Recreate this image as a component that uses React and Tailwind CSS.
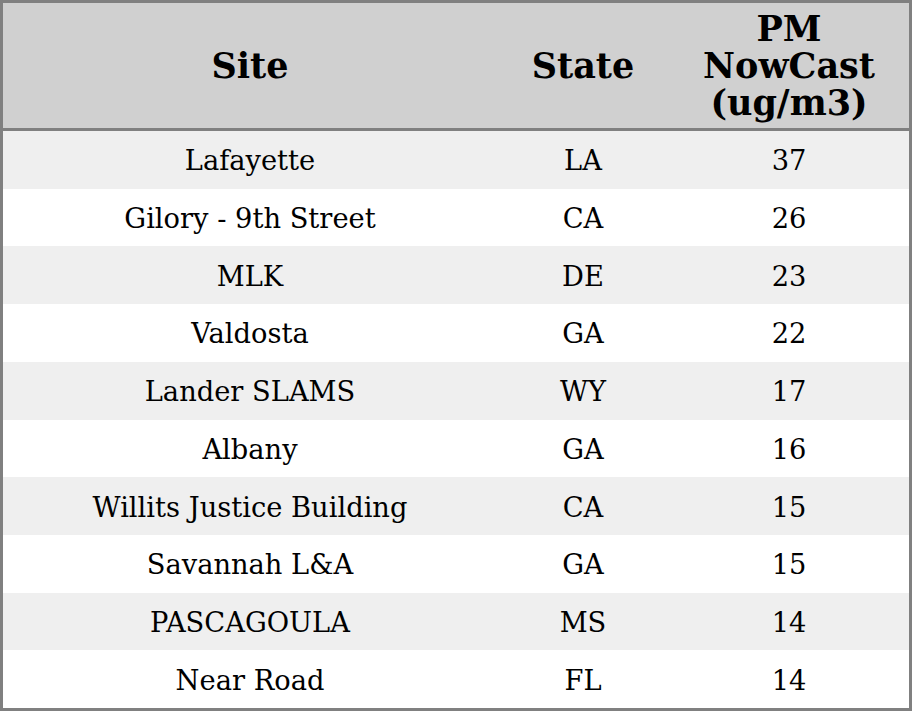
import React from 'react';

const rows = [
  ['Lafayette', 'LA', '37'],
  ['Gilory - 9th Street', 'CA', '26'],
  ['MLK', 'DE', '23'],
  ['Valdosta', 'GA', '22'],
  ['Lander SLAMS', 'WY', '17'],
  ['Albany', 'GA', '16'],
  ['Willits Justice Building', 'CA', '15'],
  ['Savannah L&A', 'GA', '15'],
  ['PASCAGOULA', 'MS', '14'],
  ['Near Road', 'FL', '14'],
];

export default function App() {
  return (
    <div className="w-[912px] h-[711px] bg-white" style={{ fontFamily: '"DejaVu Serif", serif' }}>
      <div className="w-full h-full border-[3px] border-[#808080] flex flex-col text-black">
        {/* Header */}
        <div className="flex h-[128px] bg-[#d0d0d0] border-b-[3px] border-[#808080] font-bold text-[35px] leading-[37px] shrink-0">
          <div className="w-[494px] flex items-center justify-center text-center">Site</div>
          <div className="w-[172px] flex items-center justify-center text-center">State</div>
          <div className="flex-1 flex items-center justify-center text-center">
            PM<br />NowCast<br />(ug/m3)
          </div>
        </div>

        {/* Body */}
        <div className="flex-1 flex flex-col text-[27.3px]">
          {rows.map((r, i) => (
            <div key={i} className={`flex-1 flex items-center pt-[4px] ${i % 2 === 0 ? 'bg-[#efefef]' : 'bg-white'}`}>
              <div className="w-[494px] text-center">{r[0]}</div>
              <div className="w-[172px] text-center">{r[1]}</div>
              <div className="flex-1 text-center">{r[2]}</div>
            </div>
          ))}
        </div>
      </div>
    </div>
  );
}
